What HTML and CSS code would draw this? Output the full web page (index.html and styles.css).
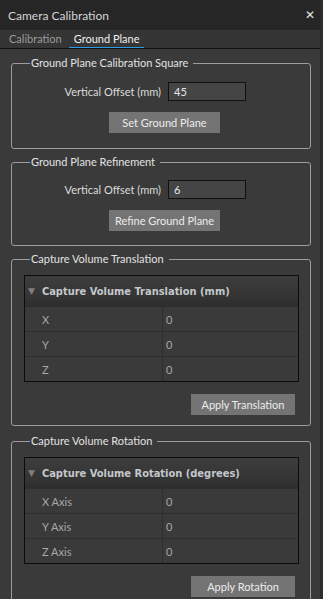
FILE: index.html
```html
<!DOCTYPE html>
<html lang="en">
<head>
    <meta charset="UTF-8">
    <title>Camera Calibration</title>
    <link rel="stylesheet" href="styles.css">
</head>
<body>
    <div class="window">
        <div class="titlebar">
            <span>Camera Calibration</span>
            <span class="close">&#x2715;</span>
        </div>

        <div class="tabs">
            <div class="tab">Calibration</div>
            <div class="tab active">Ground Plane</div>
        </div>

        <div class="content">
            <!-- Ground plane square -->
            <fieldset class="group">
                <legend>Ground Plane Calibration Square</legend>
                <div class="form-row">
                    <label>Vertical Offset (mm)</label>
                    <input type="text" value="45">
                </div>
                <button class="btn btn-center">Set Ground Plane</button>
            </fieldset>

            <!-- Refinement -->
            <fieldset class="group group-compact">
                <legend>Ground Plane Refinement</legend>
                <div class="form-row">
                    <label>Vertical Offset (mm)</label>
                    <input type="text" value="6">
                </div>
                <button class="btn btn-center">Refine Ground Plane</button>
            </fieldset>

            <!-- Translation -->
            <fieldset class="group group-tree">
                <legend>Capture Volume Translation</legend>
                <div class="tree">
                    <div class="tree-head"><span class="arrow">&#9660;</span>Capture Volume Translation (mm)</div>
                    <div class="tree-row"><span>X</span><span>0</span></div>
                    <div class="tree-row"><span>Y</span><span>0</span></div>
                    <div class="tree-row"><span>Z</span><span>0</span></div>
                </div>
                <button class="btn btn-right">Apply Translation</button>
            </fieldset>

            <!-- Rotation -->
            <fieldset class="group group-tree">
                <legend>Capture Volume Rotation</legend>
                <div class="tree">
                    <div class="tree-head"><span class="arrow">&#9660;</span>Capture Volume Rotation (degrees)</div>
                    <div class="tree-row"><span>X Axis</span><span>0</span></div>
                    <div class="tree-row"><span>Y Axis</span><span>0</span></div>
                    <div class="tree-row"><span>Z Axis</span><span>0</span></div>
                </div>
                <button class="btn btn-right">Apply Rotation</button>
            </fieldset>
        </div>
    </div>
</body>
</html>
```

FILE: styles.css
```css
body {
    margin: 0;
    background-color: #2d2d2d;
    font-family: Lato, "Noto Sans", sans-serif;
    font-size: 11px;
    color: #d8d8d8;
    overflow: hidden;
}

.window {
    width: 320px;
    height: 599px;
    background-color: #3a3a3a;
    overflow: hidden;
}

.titlebar {
    height: 30px;
    display: flex;
    align-items: center;
    justify-content: space-between;
    padding: 0 5px 0 8px;
    background-color: #262626;
    font-size: 12px;
    color: #d4d4d4;
}

.close {
    font-family: "DejaVu Sans", sans-serif;
    font-size: 12px;
    font-weight: bold;
    color: #e6e6e6;
}

.tabs {
    display: flex;
    height: 18px;
    padding-left: 4px;
    background-color: #353535;
    border-bottom: 1px solid #111;
}

.tab {
    padding: 0 5px;
    line-height: 18px;
    color: #9a9a9a;
}

.tab.active {
    margin-left: 2px;
    color: #f0f0f0;
    box-shadow: inset 0 -1px 0 #2e9be6;
}

.content {
    padding: 7px 9px 0 11px;
}

.group {
    margin: 0 0 6px 0;
    padding: 12px 11px 15px 12px;
    border: 1px solid #9c9c9c;
    border-radius: 3px;
}

.group-compact {
    padding-top: 11px;
    padding-bottom: 14px;
}

.group-tree {
    padding-top: 9px;
    padding-bottom: 10px;
    margin-bottom: 8px;
}

.group legend {
    margin-left: 6px;
    padding: 0 5px 0 1px;
    line-height: 14px;
    color: #e2e2e2;
}

.form-row {
    display: flex;
    align-items: center;
    gap: 7px;
}

.form-row label {
    width: 137px;
    text-align: right;
    color: #dcdcdc;
}

.form-row input {
    width: 78px;
    height: 19px;
    box-sizing: border-box;
    margin: 0;
    padding: 0 5px;
    background-color: #454545;
    border: 1px solid #111;
    color: #e8e8e8;
    font-family: inherit;
    font-size: 11px;
    outline: none;
}

.btn {
    display: block;
    height: 21px;
    padding: 0;
    background-color: #747474;
    border: none;
    color: #ececec;
    font-family: inherit;
    font-size: 11px;
}

.btn-center {
    width: 111px;
    margin: 11px 0 0 85px;
}

.btn-right {
    width: 104px;
    margin: 12px 4px 0 auto;
}

.tree {
    border: 1px solid #0c0c0c;
    background-color: #3a3a3a;
}

.tree-head {
    height: 30px;
    display: flex;
    align-items: center;
    padding-left: 3px;
    background: linear-gradient(#3d3d3d, #343434 70%, #2d2d2d);
    font-family: "DejaVu Sans Condensed", "DejaVu Sans", sans-serif;
    font-weight: bold;
    font-size: 11px;
    color: #c4c8cc;
}

.arrow {
    font-family: "DejaVu Sans", sans-serif;
    font-size: 9px;
    color: #7e7e7e;
    margin-right: 7px;
}

.tree-row {
    display: grid;
    grid-template-columns: 137px 1fr;
    height: 24px;
    border-top: 1px solid #2e2e2e;
    color: #a8a8a8;
}

.tree-row span {
    display: flex;
    align-items: center;
    padding-left: 17px;
}

.tree-row span + span {
    padding-left: 3px;
    border-left: 1px solid #2e2e2e;
}
```
